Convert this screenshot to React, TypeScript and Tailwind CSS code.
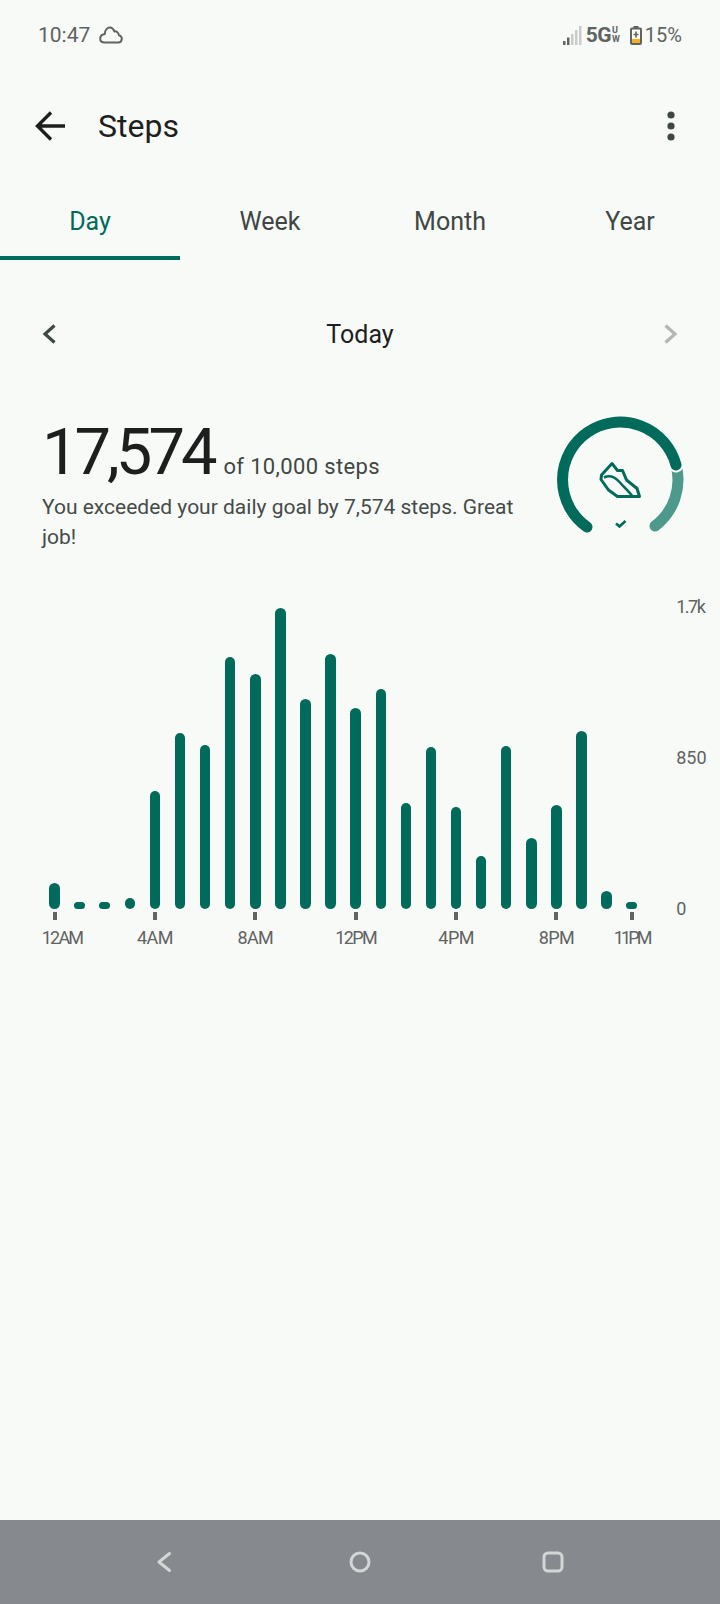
import React from 'react';

const bars = [26, 7, 7, 11, 118, 176, 164, 252, 235, 301, 210, 255, 201, 220, 106, 162, 102, 53, 163, 71, 104, 178, 18, 7];

const ticks: Record<number, { label: string; cls: string }> = {
  0: { label: '12AM', cls: 'ml-[15px] tracking-[-1.8px]' },
  4: { label: '4AM', cls: 'tracking-[-0.6px]' },
  8: { label: '8AM', cls: 'tracking-[-0.6px]' },
  12: { label: '12PM', cls: 'tracking-[-1.6px]' },
  16: { label: '4PM', cls: 'tracking-[-0.6px]' },
  20: { label: '8PM', cls: 'tracking-[-0.6px]' },
  23: { label: '11PM', cls: 'tracking-[-2.8px]' },
};

const tabs = ['Day', 'Week', 'Month', 'Year'];

const StatusBar = () => (
  <div className="flex h-[70px] items-center pl-[38px] pr-[38px] text-[#5f6362]">
    <span className="text-[21px] leading-none">10:47</span>
    <svg width="24" height="18" viewBox="0 0 24 18" fill="none" stroke="#5f6362" strokeWidth="2" strokeLinejoin="round" className="ml-[9px]">
      <path d="M5.5 16.5H19a3.6 3.6 0 0 0 1-7.1C19.6 6.5 17.6 5 15.4 5.4 14.4 3 12.8 1.5 11 1.5 8 1.5 6 4.5 5.8 8 3 8.5 1.2 10 1.2 12.5S3 16.5 5.5 16.5Z" />
    </svg>
    <div className="ml-auto flex items-center">
      <svg width="20" height="19" viewBox="0 0 20 19">
        <rect x="0" y="15" width="2.5" height="4" fill="#5f6362" />
        <rect x="4" y="11.5" width="2.5" height="7.5" fill="#5f6362" />
        <rect x="8" y="8" width="2.5" height="11" fill="#c9cbca" />
        <rect x="12" y="4" width="2.5" height="15" fill="#c9cbca" />
        <rect x="16" y="0" width="2.5" height="19" fill="#c9cbca" />
      </svg>
      <span className="ml-[3px] text-[21px] font-bold leading-none tracking-[-0.6px]">5G</span>
      <span className="ml-[1px] flex flex-col text-[9px] font-bold leading-[9px]">
        <span>U</span>
        <span>W</span>
      </span>
      <svg width="12" height="19" viewBox="0 0 12 19" className="ml-[10px]">
        <rect x="3.5" y="0" width="5" height="3" fill="#5f6362" />
        <rect x="1" y="2.5" width="10" height="15.5" rx="1" fill="none" stroke="#5f6362" strokeWidth="2" />
        <rect x="2" y="13" width="8" height="4" fill="#f2b01e" />
        <path d="M6 5.5v6M3.5 8.5h5" stroke="#5f6362" strokeWidth="1.6" />
      </svg>
      <span className="ml-[3px] text-[20px] leading-none">15%</span>
    </div>
  </div>
);

const Toolbar = () => (
  <div className="flex h-[112px] items-center pl-[35px] pr-[44px]">
    <svg width="30" height="30" viewBox="0 0 30 30" fill="none" stroke="#1d1f1e" strokeWidth="3.4">
      <path d="M30 15H3M16 1.5L2.5 15 16 28.5" />
    </svg>
    <span className="ml-[33px] text-[32px] leading-none text-[#1d1f1e]">Steps</span>
    <svg width="10" height="30" viewBox="0 0 10 30" fill="#3f4744" className="ml-auto">
      <circle cx="5" cy="4" r="3.6" />
      <circle cx="5" cy="15" r="3.6" />
      <circle cx="5" cy="26" r="3.6" />
    </svg>
  </div>
);

const Tabs = () => (
  <div>
    <div className="mt-[4px] flex h-[70px]">
      {tabs.map((t, i) => (
        <div
          key={t}
          className={`flex w-[180px] items-center justify-center text-[25px] font-[450] leading-none ${
            i === 0 ? 'text-[#016b5b]' : 'text-[#3f4744]'
          }`}
        >
          {t}
        </div>
      ))}
    </div>
    <div className="h-[4px] w-[180px] bg-[#016b5b]" />
  </div>
);

const DateRow = () => (
  <div className="mt-[50px] flex h-[48px] items-center justify-between pl-[42px] pr-[42px]">
    <svg width="14" height="20" viewBox="0 0 14 20" fill="none" stroke="#3f4744" strokeWidth="3.2">
      <path d="M12.5 1.5L3 10l9.5 8.5" />
    </svg>
    <span className="text-[25px] font-[450] leading-none text-[#1d1f1e]">Today</span>
    <svg width="14" height="20" viewBox="0 0 14 20" fill="none" stroke="#b3b6b4" strokeWidth="3.2">
      <path d="M1.5 1.5L11 10l-9.5 8.5" />
    </svg>
  </div>
);

const Ring = () => (
  <svg width="136" height="124" viewBox="552 414 136 124" fill="none" className="ml-auto -mt-[5px] shrink-0">
    <path d="M655 526A57.7 57.7 0 0 0 676 465" stroke="#4d9a8c" strokeWidth="11" strokeLinecap="round" />
    <path d="M676 465A57.7 57.7 0 0 0 670 450" stroke="#f8faf7" strokeWidth="15" strokeLinecap="round" />
    <path d="M587 527A57.7 57.7 0 1 1 676 465" stroke="#016b5b" strokeWidth="11" strokeLinecap="round" />
    <path
      d="M612 463.5L617.5 470.5 622.5 470.5 626.5 480 637 488.5 639.5 496.5 617.5 496.5 608.5 490 601 479.5 601.5 475Z"
      stroke="#016b5b"
      strokeWidth="3"
      strokeLinejoin="round"
    />
    <path d="M604 477.5C609 475 614 476 619 481.5S628 491 632 495.5" stroke="#016b5b" strokeWidth="2.6" />
    <path d="M616 523.5l3.5 3 6-5.5" stroke="#016b5b" strokeWidth="2.6" />
  </svg>
);

const Summary = () => (
  <div className="mt-[61px] flex pl-[42px] pr-[32px]">
    <div className="w-[480px]">
      <div className="flex items-baseline">
        <span className="text-[65px] leading-[66px] tracking-[-4px] text-[#1d1f1e]">17,574</span>
        <span className="ml-[10px] text-[22px] leading-none tracking-[0.35px] text-[#3f4744]">of 10,000 steps</span>
      </div>
      <p className="mt-[7px] text-[21px] leading-[30px] text-[#454b48]">
        You exceeded your daily goal by 7,574 steps. Great job!
      </p>
    </div>
    <Ring />
  </div>
);

const Chart = () => (
  <div className="mt-[43px] flex items-start pl-[42px]">
    <div>
      <div className="flex h-[314px] items-end">
        {bars.map((h, i) => (
          <div key={i} className="flex w-[25.1px] justify-center">
            <div className="w-[10.5px] rounded-full bg-[#016b5b]" style={{ height: h }} />
          </div>
        ))}
      </div>
      <div className="mt-[3px] flex">
        {bars.map((_, i) => (
          <div key={i} className="flex h-[40px] w-[25.1px] flex-col items-center">
            {ticks[i] && (
              <>
                <div className="h-[8px] w-[4px] bg-[#616564]" />
                <span className={`mt-[6px] whitespace-nowrap text-[18px] leading-[24px] text-[#5f6362] ${ticks[i].cls}`}>
                  {ticks[i].label}
                </span>
              </>
            )}
          </div>
        ))}
      </div>
    </div>
    <div className="ml-[32px] flex h-[326px] flex-col justify-between text-[18px] leading-[24px] text-[#5f6362]">
      <span className="tracking-[-1.5px]">1.7k</span>
      <span>850</span>
      <span>0</span>
    </div>
  </div>
);

const NavBar = () => (
  <div className="mt-auto flex h-[84px] items-center bg-[#86898d] pl-[152px]">
    <svg width="24" height="24" viewBox="0 0 24 24" fill="none" stroke="#d4d5d6" strokeWidth="3" strokeLinecap="round" strokeLinejoin="round">
      <path d="M17.5 3.5L7 12l10.5 8.5" />
    </svg>
    <svg width="24" height="24" viewBox="0 0 24 24" fill="none" stroke="#d4d5d6" strokeWidth="3" className="ml-[172px]">
      <circle cx="12" cy="12" r="9" />
    </svg>
    <svg width="24" height="24" viewBox="0 0 24 24" fill="none" stroke="#d4d5d6" strokeWidth="3" className="ml-[169px]">
      <rect x="3" y="3" width="18" height="18" rx="4" />
    </svg>
  </div>
);

export default function App() {
  return (
    <div className="flex h-[1604px] w-[720px] flex-col overflow-hidden bg-[#f8faf7] font-['Roboto',sans-serif]">
      <StatusBar />
      <Toolbar />
      <Tabs />
      <DateRow />
      <Summary />
      <Chart />
      <NavBar />
    </div>
  );
}
